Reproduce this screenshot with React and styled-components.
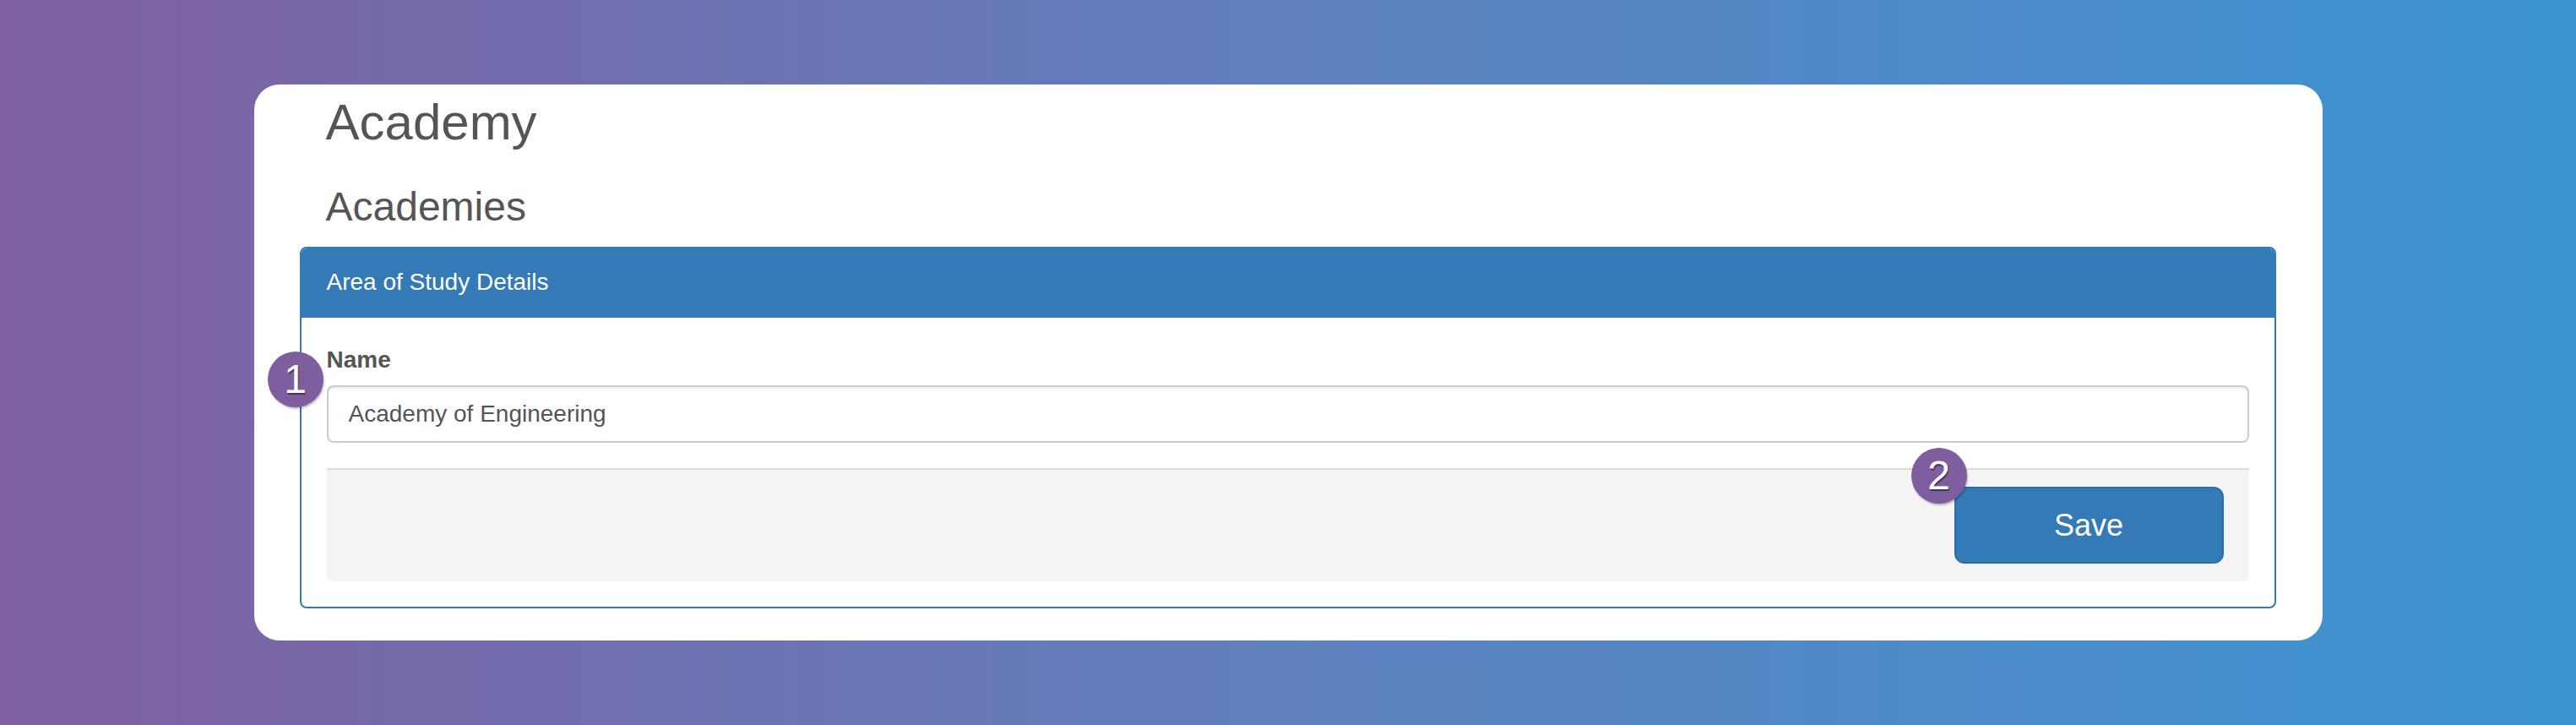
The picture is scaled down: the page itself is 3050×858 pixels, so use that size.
import React, { useState } from "react";
import styled, { createGlobalStyle } from "styled-components";

const GlobalStyle = createGlobalStyle`
  html, body {
    margin: 0;
    padding: 0;
  }
  body {
    font-family: "Liberation Sans", Arial, Helvetica, sans-serif;
    background: linear-gradient(to right, #8060a2 0%, #5f80bd 50%, #3b94d2 100%);
    min-height: 858px;
  }
  * {
    box-sizing: border-box;
  }
`;

const Page = styled.div`
  min-height: 858px;
  padding-top: 100px;
  display: flex;
  justify-content: center;
  align-items: flex-start;
`;

const Card = styled.div`
  width: 2449px;
  background: #fff;
  border-radius: 30px;
  padding: 12px 55px 38px 54px;
`;

const Title = styled.h1`
  margin: 0 0 40px;
  padding-left: 31px;
  font-size: 60px;
  line-height: 66px;
  font-weight: 400;
  color: #555;
`;

const SubTitle = styled.h3`
  margin: 0 0 21px;
  padding-left: 31px;
  font-size: 48px;
  line-height: 53px;
  font-weight: 400;
  color: #555;
`;

const Panel = styled.div`
  border: 2px solid #337ab7;
  border-radius: 8px;
  background: #fff;
`;

const PanelHeading = styled.div`
  background: #337ab7;
  color: #fff;
  font-size: 28px;
  line-height: 40px;
  padding: 20px 30px;
  border-bottom: 2px solid transparent;
  border-radius: 6px 6px 0 0;
`;

const PanelBody = styled.div`
  padding: 30px;
`;

const FormGroup = styled.div`
  position: relative;
  margin-bottom: 30px;
`;

const Label = styled.label`
  display: block;
  font-size: 28px;
  line-height: 40px;
  font-weight: 700;
  color: #555;
  margin-bottom: 10px;
`;

const Input = styled.input`
  display: block;
  width: 100%;
  height: 68px;
  padding: 12px 24px;
  font-family: "Liberation Sans", Arial, sans-serif;
  font-size: 28px;
  color: #555;
  background: #fff;
  border: 2px solid #ccc;
  border-radius: 8px;
  box-shadow: inset 0 2px 2px rgba(0, 0, 0, 0.075);
  outline: none;
`;

const Footer = styled.div`
  display: flex;
  justify-content: flex-end;
  background: #f4f4f4;
  border-top: 2px solid #ddd;
  border-radius: 0 0 8px 8px;
  padding: 20px 30px 21px;
`;

const ButtonWrap = styled.div`
  position: relative;
`;

const SaveButton = styled.button`
  width: 319px;
  height: 91px;
  background: #337ab7;
  border: 2px solid #2e6da4;
  border-radius: 12px;
  color: #fff;
  font-family: "Liberation Sans", Arial, sans-serif;
  font-size: 36px;
  cursor: pointer;
`;

const Badge = styled.span`
  position: absolute;
  left: ${(p) => p.left}px;
  top: ${(p) => p.top}px;
  width: 66px;
  height: 66px;
  border-radius: 50%;
  background: #7f5ea0;
  color: #fff;
  font-size: 48px;
  line-height: 66px;
  text-align: center;
  text-shadow: 1px 2px 1px rgba(0, 0, 0, 0.45);
  box-shadow: 1px 2px 2px rgba(0, 0, 0, 0.25);
  z-index: 2;
`;

export default function App() {
  const [name, setName] = useState("Academy of Engineering");

  return (
    <>
      <GlobalStyle />
      <Page>
        <Card>
          <Title>Academy</Title>
          <SubTitle>Academies</SubTitle>
          <Panel>
            <PanelHeading>Area of Study Details</PanelHeading>
            <PanelBody>
              <FormGroup>
                <Badge left={-70} top={10}>1</Badge>
                <Label htmlFor="name">Name</Label>
                <Input
                  id="name"
                  value={name}
                  onChange={(e) => setName(e.target.value)}
                />
              </FormGroup>
              <Footer>
                <ButtonWrap>
                  <Badge left={-51} top={-46}>2</Badge>
                  <SaveButton type="button">Save</SaveButton>
                </ButtonWrap>
              </Footer>
            </PanelBody>
          </Panel>
        </Card>
      </Page>
    </>
  );
}
